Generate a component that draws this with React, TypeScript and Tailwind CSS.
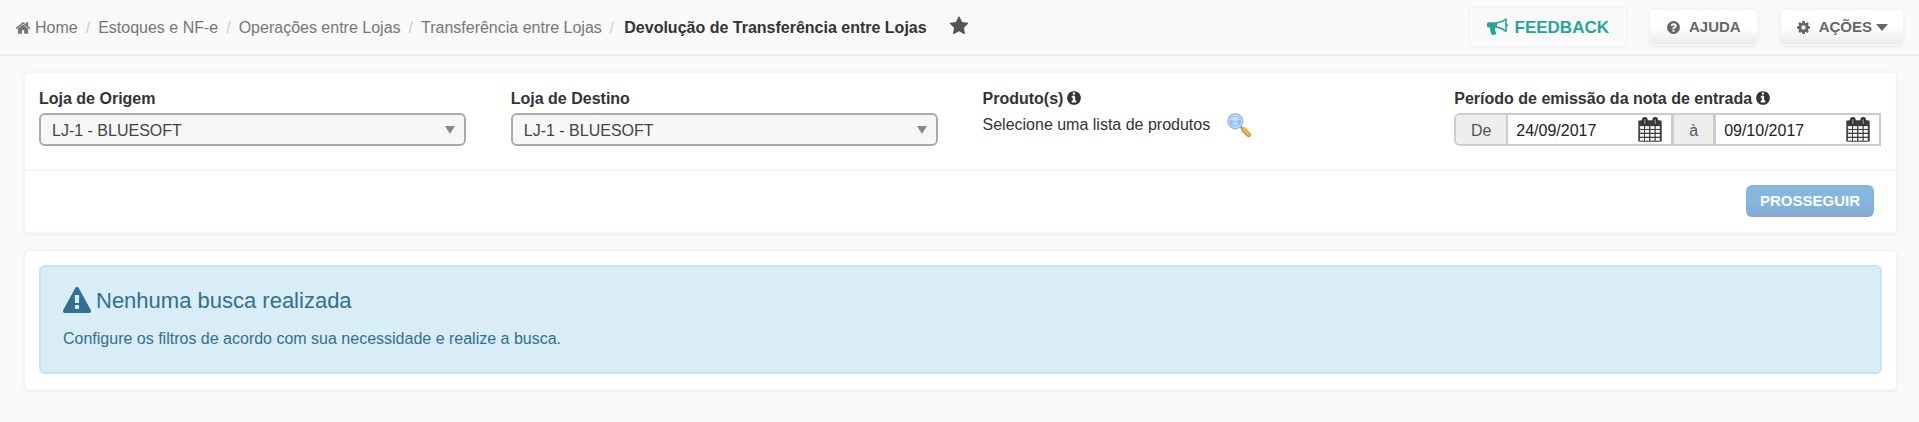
import React, { useState } from 'react';

const HOME =
  'M1472 992v480q0 26-19 45t-45 19h-384v-384h-256v384h-384q-26 0-45-19t-19-45v-480q0-1 .5-3t.5-3l575-474 575 474q1 2 1 6zm223-69l-62 74q-8 9-21 11h-3q-13 0-21-7l-692-577-692 577q-12 8-24 7-13-2-21-11l-62-74q-8-10-7-23.5t11-21.5l719-599q32-26 76-26t76 26l244 204v-195q0-14 9-23t23-9h192q14 0 23 9t9 23v408l219 182q10 8 11 21.5t-7 23.5z';
const STAR =
  'M1728 647q0 22-26 48l-363 354 86 500q1 7 1 20 0 21-10.5 35.5t-30.5 14.5q-19 0-40-12l-449-236-449 236q-22 12-40 12-21 0-31.5-14.5t-10.5-35.5q0-6 2-20l86-500-364-354q-25-27-25-48 0-37 56-46l502-73 225-455q19-41 49-41t49 41l225 455 502 73q56 9 56 46z';
const QUESTION =
  'M1024 1376v-192q0-14-9-23t-23-9h-192q-14 0-23 9t-9 23v192q0 14 9 23t23 9h192q14 0 23-9t9-23zm256-672q0-88-55.5-163t-138.5-116-170-41q-243 0-371 213-15 24 8 42l132 100q7 6 19 6 16 0 25-12 53-68 86-92 34-24 86-24 48 0 85.5 26t37.5 59q0 38-20 61t-68 45q-63 28-115.5 86.5t-52.5 125.5v36q0 14 9 23t23 9h192q14 0 23-9t9-23q0-19 21.5-49.5t54.5-49.5q32-18 49-28.5t46-35 44.5-48 28-60.5 12.5-81zm384 192q0 209-103 385.5t-279.5 279.5-385.5 103-385.5-103-279.5-279.5-103-385.5 103-385.5 279.5-279.5 385.5-103 385.5 103 279.5 279.5 103 385.5z';
const INFO =
  'M1152 1376v-160q0-14-9-23t-23-9h-96v-512q0-14-9-23t-23-9h-320q-14 0-23 9t-9 23v160q0 14 9 23t23 9h96v320h-96q-14 0-23 9t-9 23v160q0 14 9 23t23 9h448q14 0 23-9t9-23zm-128-896v-160q0-14-9-23t-23-9h-192q-14 0-23 9t-9 23v160q0 14 9 23t23 9h192q14 0 23-9t9-23zm640 416q0 209-103 385.5t-279.5 279.5-385.5 103-385.5-103-279.5-279.5-103-385.5 103-385.5 279.5-279.5 385.5-103 385.5 103 279.5 279.5 103 385.5z';
const COG =
  'M1152 896q0-106-75-181t-181-75-181 75-75 181 75 181 181 75 181-75 75-181zm512-109v222q0 12-8 23t-20 13l-185 28q-19 54-39 91 35 50 107 138 10 12 10 25t-9 23q-27 37-99 108t-94 71q-12 0-26-9l-138-108q-44 23-91 38-16 136-29 186-7 28-36 28h-222q-14 0-24.5-8.5t-11.5-21.5l-28-184q-49-16-90-37l-141 107q-10 9-25 9-14 0-25-11-126-114-165-168-7-10-7-23 0-12 8-23 15-21 51-66.5t54-70.5q-27-50-41-99l-183-27q-13-2-21-12.5t-8-23.5v-222q0-12 8-23t19-13l186-28q14-46 39-92-40-57-107-138-10-12-10-24 0-10 9-23 26-36 98.5-107.5t94.5-71.5q13 0 26 10l138 107q44-23 91-38 16-136 29-186 7-28 36-28h222q14 0 24.5 8.5t11.5 21.5l28 184q49 16 90 37l142-107q9-9 24-9 13 0 25 10 129 119 165 170 7 8 7 22 0 12-8 23-15 21-51 66.5t-54 70.5q26 50 41 98l183 28q13 2 21 12.5t8 23.5z';
const WARNING =
  'M1024 1375v-190q0-14-9.5-23.5t-22.5-9.5h-192q-13 0-22.5 9.5t-9.5 23.5v190q0 14 9.5 23.5t22.5 9.5h192q13 0 22.5-9.5t9.5-23.5zm-2-374l18-459q0-12-10-19-13-11-24-11h-220q-11 0-24 11-10 7-10 21l17 457q0 10 10 16.5t24 6.5h185q14 0 23.5-6.5t10.5-16.5zm-14-934l768 1408q35 63-2 126-17 29-46.5 46t-63.5 17h-1536q-34 0-63.5-17t-46.5-46q-37-63-2-126l768-1408q17-31 47-49t65-18 65 18 47 49z';

const Icon: React.FC<{ path: string; className: string }> = ({ path, className }) => (
  <svg viewBox="0 0 1792 1792" fill="currentColor" aria-hidden="true" className={`shrink-0 ${className}`}>
    <path d={path} />
  </svg>
);

const MegaphoneIcon = () => (
  <svg viewBox="0 0 21 18" className="h-[18px] w-[21px] shrink-0" aria-hidden="true">
    <path
      d="M1.5 4.3H10V9.600H8.200q-.6 1 .1 1.900-.6 1 .2 2 .1.900.9 1.600-.5 1.900-3 1.900-1.900 0-2.300-1.400Q2.900 12.500 3 9.600H1.500Q0 9.500 0 8V5.800Q0 4.300 1.500 4.300z"
      fill="currentColor"
    />
    <path d="M9 5Q14 4.800 19 1v12.400Q14 9.300 9 9" fill="none" stroke="currentColor" strokeWidth="1.5" strokeLinejoin="round" />
    <path d="M19 5.500q2 .3 2 1.700t-2 1.700z" fill="currentColor" />
  </svg>
);

const SearchIcon = () => (
  <svg viewBox="0 0 24 24" className="block size-6" aria-hidden="true">
    <defs>
      <radialGradient id="lens" cx="0.5" cy="0.65" r="0.6">
        <stop offset="0" stopColor="#b5e2ff" />
        <stop offset="0.6" stopColor="#7db8fb" />
        <stop offset="1" stopColor="#8fbcf5" />
      </radialGradient>
    </defs>
    <path d="M13 13l3.500 3.500" stroke="#8f93a8" strokeWidth="2.4" />
    <path d="M16.800 16.800l4.800 4.800" stroke="#b08a5c" strokeWidth="4.8" strokeLinecap="round" />
    <path d="M16.800 16.400l4.800 4.800" stroke="#fbb93a" strokeWidth="3" strokeLinecap="round" />
    <circle cx="8.3" cy="8.3" r="7.3" fill="url(#lens)" stroke="#a9b3cc" strokeWidth="1.6" />
    <circle cx="8.3" cy="8.3" r="6.2" fill="none" stroke="#dbe7fa" strokeWidth="0.9" />
    <path d="M3.500 7a5 5 0 0 1 9.600 0q-4.800 1.500-9.600 0z" fill="#c4deff" />
  </svg>
);

const CalendarIcon = () => (
  <svg viewBox="0 0 24 25" className="block h-[25px] w-6" aria-hidden="true">
    <rect x="0.3" y="3.3" width="23.4" height="21.4" rx="1.5" fill="#3d3d3d" />
    <rect x="4" y="0" width="5.6" height="8" rx="2.8" fill="#333" />
    <rect x="14.4" y="0" width="5.6" height="8" rx="2.8" fill="#333" />
    <path d="M6.800 2.800v3.500M17.200 2.800v3.500" stroke="#999" strokeWidth="1.3" strokeLinecap="round" />
    {[9.2, 13, 17, 21].map((y) =>
      [1.9, 7, 12.4, 17.7].map((x) => <rect key={`${x}-${y}`} x={x} y={y} width="4.1" height="2.7" fill="#fff" />),
    )}
  </svg>
);

const crumbs = ['Estoques e NF-e', 'Operações entre Lojas', 'Transferência entre Lojas'];

interface StoreSelectProps {
  id: string;
  label: string;
}

const StoreSelect: React.FC<StoreSelectProps> = ({ id, label }) => (
  <div>
    <label htmlFor={id} className="block h-6 font-bold">
      {label}
    </label>
    <div className="relative">
      <select
        id={id}
        className="block h-[33px] w-full appearance-none rounded-md border-2 border-[#a9a9a9] bg-[#f7f7f7] px-[11px] pt-0.5 text-[#444]"
      >
        <option>LJ-1 - BLUESOFT</option>
      </select>
      <svg viewBox="0 0 10 8" className="pointer-events-none absolute right-[11px] top-[13px] h-2 w-[10px]" aria-hidden="true">
        <path d="M0 0h10l-5 8z" fill="#888" />
      </svg>
    </div>
  </div>
);

interface DateFieldProps {
  label: string;
  value: string;
  onChange: (value: string) => void;
}

const DateField: React.FC<DateFieldProps> = ({ label, value, onChange }) => (
  <div className="flex min-w-0 flex-1 items-center justify-between pl-2 pr-[9px]">
    <input
      aria-label={label}
      className="w-24 min-w-0 bg-transparent pt-0.5 text-[#222] outline-none"
      value={value}
      onChange={(e) => onChange(e.target.value)}
    />
    <button type="button" aria-label={`Abrir calendário: ${label}`} className="shrink-0">
      <CalendarIcon />
    </button>
  </div>
);

const App: React.FC = () => {
  const [from, setFrom] = useState('24/09/2017');
  const [to, setTo] = useState('09/10/2017');

  return (
    <div className="min-h-screen bg-[#f9f9f9] font-['Liberation_Sans',Arial,sans-serif] text-base leading-5 text-[#333]">
      <header className="flex h-14 items-center justify-between border-b-2 border-[#ebebeb] pl-[15px] pr-[14px]">
        <nav aria-label="Breadcrumb" className="flex items-center pt-0.5 text-[#777]">
          <a href="#" className="flex items-center gap-1">
            <Icon path={HOME} className="size-4" />
            Home
          </a>
          {crumbs.map((crumb) => (
            <React.Fragment key={crumb}>
              <span className="px-2 text-[#ccc]">/</span>
              <a href="#">{crumb}</a>
            </React.Fragment>
          ))}
          <span className="pl-2 pr-[10px] text-[#ccc]">/</span>
          <h1 className="font-bold text-[#333]">Devolução de Transferência entre Lojas</h1>
          <button type="button" aria-label="Favoritar" className="ml-[22px] pb-1 text-[#555]">
            <Icon path={STAR} className="block size-5" />
          </button>
        </nav>

        <div className="flex items-center gap-5 font-bold text-[#666]">
          <button
            type="button"
            className="flex h-[42px] items-center gap-[7px] rounded-md border-2 border-[#f0f5fb] px-[17px] text-[17px] text-[#26a69a]"
          >
            <MegaphoneIcon />
            <span className="pt-0.5">FEEDBACK</span>
          </button>
          <button
            type="button"
            className="flex h-[38px] items-center gap-2 rounded-md border-2 border-[#f0f5fb] bg-linear-to-b from-white from-50% to-[#ebebeb] px-4 text-[15px] shadow-xs"
          >
            <Icon path={QUESTION} className="size-[15px]" />
            AJUDA
          </button>
          <button
            type="button"
            className="flex h-[38px] items-center rounded-md border-2 border-[#f0f5fb] bg-linear-to-b from-white from-50% to-[#ebebeb] px-[15px] text-[15px] shadow-xs"
          >
            <Icon path={COG} className="mr-2 size-[15px]" />
            AÇÕES
            <svg viewBox="0 0 12 7" className="ml-1 h-[7px] w-3" aria-hidden="true">
              <path d="M0 0h12l-6 7z" fill="currentColor" />
            </svg>
          </button>
        </div>
      </header>

      <main className="flex flex-col gap-[15px] pb-4 pl-[23px] pr-[21px] pt-[15px]">
        <form className="rounded-md border-2 border-[#f0f5fb] bg-white shadow-xs" onSubmit={(e) => e.preventDefault()}>
          <div className="grid grid-cols-4 gap-x-[45px] border-b-2 border-[#f0f5fb] pb-[23px] pl-[14px] pr-[15px] pt-4">
            <StoreSelect id="origem" label="Loja de Origem" />
            <StoreSelect id="destino" label="Loja de Destino" />
            <div>
              <h2 className="flex h-6 items-start gap-[3px] font-bold">
                Produto(s)
                <Icon path={INFO} className="mt-px size-4" />
              </h2>
              <div className="flex items-center gap-[17px]">
                <span>Selecione uma lista de produtos</span>
                <button type="button" aria-label="Buscar produtos">
                  <SearchIcon />
                </button>
              </div>
            </div>
            <div>
              <h2 className="flex h-6 items-start gap-[3px] font-bold">
                Período de emissão da nota de entrada
                <Icon path={INFO} className="mt-px size-4" />
              </h2>
              <div className="flex h-[33px] overflow-hidden rounded-l-md border-2 border-[#ccc]">
                <span className="flex w-[52px] items-center justify-center border-r-2 border-[#ccc] bg-[#eee] pt-0.5 text-[#555]">De</span>
                <DateField label="Data inicial" value={from} onChange={setFrom} />
                <span className="flex w-[45px] items-center justify-center border-x-3 border-[#ccc] bg-[#eee] pt-0.5 text-[#555]">à</span>
                <DateField label="Data final" value={to} onChange={setTo} />
              </div>
            </div>
          </div>
          <div className="flex justify-end px-[22px] pb-[15px] pt-[14px]">
            <button
              type="submit"
              className="h-8 rounded-md bg-linear-to-b from-[#85b6e0] from-50% to-[#82a9d2] px-[14px] text-[15px] font-bold text-white"
            >
              PROSSEGUIR
            </button>
          </div>
        </form>

        <section className="rounded-md border-2 border-[#f0f5fb] bg-white px-[14px] pb-[15px] pt-[14px] shadow-xs">
          <div className="rounded-md border-2 border-[#bce8f1] bg-[#d9edf7] px-[22px] pb-[23px] pt-5 text-[#31708f]">
            <h2 className="flex items-center gap-[5px] text-[22px] leading-7">
              <Icon path={WARNING} className="size-7" />
              Nenhuma busca realizada
            </h2>
            <p className="pt-[14px]">Configure os filtros de acordo com sua necessidade e realize a busca.</p>
          </div>
        </section>
      </main>
    </div>
  );
};

export default App;
